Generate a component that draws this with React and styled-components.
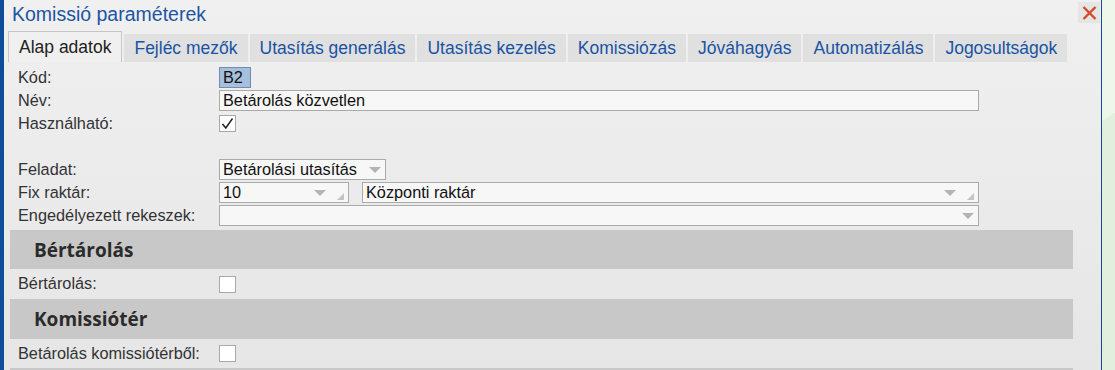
import React from 'react';
import styled, { createGlobalStyle } from 'styled-components';

const GlobalStyle = createGlobalStyle`
  html, body {
    margin: 0;
    padding: 0;
    background: #e2efdf;
    font-family: "Liberation Sans", Arial, sans-serif;
  }
`;

const Frame = styled.div`
  display: flex;
  width: 1115px;
  height: 370px;
  overflow: hidden;
`;

const LeftEdge = styled.div`
  width: 4px;
  flex-shrink: 0;
  background: #0f4d9a;
`;

const Panel = styled.div`
  flex: 1;
  display: flex;
  flex-direction: column;
  background: linear-gradient(#f0f0f0, #e6e6e6);
  border-right: 1px solid #0f4d9a;
  min-width: 0;
`;

const Outside = styled.div`
  width: 13px;
  flex-shrink: 0;
  background: linear-gradient(148deg, #eef6ec 0 32%, #e2efdf 32%);
`;

const Header = styled.div`
  flex-shrink: 0;
  height: 31px;
  display: flex;
  align-items: flex-start;
  justify-content: space-between;
  padding: 0 1px 0 8px;
`;

const Title = styled.h1`
  margin: 2px 0 0;
  font-size: 19.5px;
  font-weight: normal;
  color: #1d55a3;
  line-height: 24px;
`;

const CloseButton = styled.button`
  width: 22px;
  height: 21px;
  margin-top: 2px;
  padding: 0;
  border: none;
  background: #e5e5e5;
  display: flex;
  align-items: center;
  justify-content: center;
`;

const Tabs = styled.div`
  flex-shrink: 0;
  display: flex;
  align-items: flex-end;
  gap: 2px;
  height: 31px;
  padding-left: 4px;
`;

const Tab = styled.div`
  box-sizing: border-box;
  height: ${p => (p.$active ? '31px' : '28px')};
  padding: 0 10px;
  display: flex;
  align-items: center;
  font-size: 17.5px;
  color: ${p => (p.$active ? '#222' : '#1a53a3')};
  background: ${p => (p.$active ? '#f0f0f0' : '#e0e0e0')};
  border: ${p => (p.$active ? '1px solid #c6c6c6' : 'none')};
  border-bottom: none;
  padding-top: ${p => (p.$active ? '1px' : '0')};
  white-space: nowrap;
`;

const Form = styled.div`
  flex-shrink: 0;
  display: grid;
  grid-template-columns: 201px 1fr;
  grid-auto-rows: 23px;
  align-items: center;
  padding: 4px 0 0 14px;
  margin-bottom: 3px;
`;

const Label = styled.div`
  font-size: 16.3px;
  color: #333;
  line-height: 18px;
  margin-top: -2px;
`;

const Spacer = styled.div`
  grid-column: 1 / span 2;
`;

const Field = styled.div`
  display: flex;
  align-items: center;
  gap: 13px;
`;

const Input = styled.div`
  box-sizing: border-box;
  width: ${p => p.$width}px;
  height: 21px;
  display: flex;
  align-items: center;
  padding: 0 3px;
  font-size: 16.3px;
  color: #111;
  background: ${p => (p.$selected ? '#a6bfdc' : '#f7f7f7')};
  border: 1px solid ${p => (p.$selected ? '#6f8cb3' : '#aaaaaa')};
`;

const Combo = styled(Input)`
  justify-content: space-between;
  padding-right: 4px;
`;

const ComboIcons = styled.div`
  display: flex;
  align-items: center;
  gap: 11px;
  height: 100%;
`;

const Grip = styled.div`
  align-self: flex-end;
  margin-bottom: 2px;
  width: 0;
  height: 0;
  border-left: 7px solid transparent;
  border-bottom: 7px solid #c4c4c4;
`;

const Arrow = styled.div`
  width: 0;
  height: 0;
  border-left: 6px solid transparent;
  border-right: 6px solid transparent;
  border-top: 6px solid #b4b4b4;
`;

const Check = styled.div`
  box-sizing: border-box;
  width: 17px;
  height: 17px;
  background: #fff;
  border: 1px solid #a8a8a8;
  display: flex;
  align-items: center;
  justify-content: center;
`;

const Section = styled.div`
  flex-shrink: 0;
  margin: 0 28px 0 6px;
  height: ${p => p.$h}px;
  display: flex;
  align-items: center;
  padding-left: 24px;
  background: #c8c8c8;
  font-family: "Open Sans", "Noto Sans", sans-serif;
  font-weight: 700;
  font-size: 19px;
  color: #2b2b2b;
`;

const SectionRow = styled.div`
  flex-shrink: 0;
  height: ${p => p.$h}px;
  display: grid;
  grid-template-columns: 201px 1fr;
  align-items: center;
  padding-left: 14px;
`;

const CheckMark = () => (
  <svg width="13" height="13" viewBox="0 0 13 13">
    <path d="M1.5 7 L4.8 11 L11.5 1.5" fill="none" stroke="#222" strokeWidth="1.5" />
  </svg>
);

const ComboBox = ({ width, value, grip }) => (
  <Combo $width={width}>
    <span>{value}</span>
    <ComboIcons>
      <Arrow />
      {grip && <Grip />}
    </ComboIcons>
  </Combo>
);

const tabs = [
  'Alap adatok',
  'Fejléc mezők',
  'Utasítás generálás',
  'Utasítás kezelés',
  'Komissiózás',
  'Jóváhagyás',
  'Automatizálás',
  'Jogosultságok',
];

export default function App() {
  return (
    <>
      <GlobalStyle />
      <Frame>
        <LeftEdge />
        <Panel>
          <Header>
            <Title>Komissió paraméterek</Title>
            <CloseButton>
              <svg width="15" height="14" viewBox="0 0 15 14">
                <path d="M1.5 1 L13.5 13 M13.5 1 L1.5 13" stroke="#d8492c" strokeWidth="2.4" />
              </svg>
            </CloseButton>
          </Header>
          <Tabs>
            {tabs.map((t, i) => (
              <Tab key={t} $active={i === 0}>{t}</Tab>
            ))}
          </Tabs>
          <Form>
            <Label>Kód:</Label>
            <Field><Input $width={32} $selected>B2</Input></Field>
            <Label>Név:</Label>
            <Field><Input $width={760}>Betárolás közvetlen</Input></Field>
            <Label>Használható:</Label>
            <Field><Check><CheckMark /></Check></Field>
            <Spacer />
            <Label>Feladat:</Label>
            <Field><ComboBox width={167} value="Betárolási utasítás" /></Field>
            <Label>Fix raktár:</Label>
            <Field>
              <ComboBox width={130} value="10" grip />
              <ComboBox width={617} value="Központi raktár" grip />
            </Field>
            <Label>Engedélyezett rekeszek:</Label>
            <Field><ComboBox width={760} value="" /></Field>
          </Form>
          <Section $h={39}>Bértárolás</Section>
          <SectionRow $h={30}>
            <Label>Bértárolás:</Label>
            <Field><Check /></Field>
          </SectionRow>
          <Section $h={40}>Komissiótér</Section>
          <SectionRow $h={29}>
            <Label>Betárolás komissiótérből:</Label>
            <Field><Check /></Field>
          </SectionRow>
          <Section $h={40} />
        </Panel>
        <Outside />
      </Frame>
    </>
  );
}
